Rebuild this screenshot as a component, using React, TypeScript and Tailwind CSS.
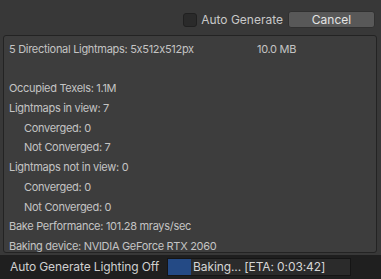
export default function App() {
  const font = { fontFamily: "Inter, 'Noto Sans', sans-serif", fontFeatureSettings: "'calt' 0" };
  const Row = ({ children, indent }: { children: React.ReactNode; indent?: boolean }) => (
    <div className={`h-[19.75px] flex items-center ${indent ? "pl-[15px]" : ""}`}>{children}</div>
  );
  return (
    <div className="w-[381px] h-[279px] bg-[#383838] flex flex-col text-[11px] tracking-[-0.3px] text-[#c4c4c4] overflow-hidden" style={font}>
      <div className="h-[35px] flex items-start justify-end pt-[11px] pr-[6px]">
        <div className="flex items-center h-[17px]">
          <div className="w-[14px] h-[14px] rounded-[3px] bg-[#2a2a2a] border border-[#202020]" />
          <span className="ml-[4px] text-[12px] tracking-normal text-[#c8c8c8]">Auto Generate</span>
          <div className="ml-[5px] w-[87px] h-[17px] rounded-[3px] bg-[#585858] border border-[#303030] flex items-center justify-center text-[12px] tracking-normal text-[#e4e4e4]">
            Cancel
          </div>
        </div>
      </div>
      <div className="ml-[3px] mr-[4px] h-[218px] rounded-[3px] border border-[#232323] bg-[#3d3d3d] pl-[5px] pt-[3px]">
        <Row>
          <span className="w-[248px]">5 Directional Lightmaps: 5x512x512px</span>
          <span>10.0 MB</span>
        </Row>
        <Row>{""}</Row>
        <Row>Occupied Texels: 1.1M</Row>
        <Row>Lightmaps in view: 7</Row>
        <Row indent>Converged: 0</Row>
        <Row indent>Not Converged: 7</Row>
        <Row>Lightmaps not in view: 0</Row>
        <Row indent>Converged: 0</Row>
        <Row indent>Not Converged: 0</Row>
        <Row>Bake Performance: 101.28 mrays/sec</Row>
        <Row>Baking device: NVIDIA GeForce RTX 2060</Row>
      </div>
      <div className="flex-1 mt-[2px] bg-[#1f1f1f] flex items-center pl-[10px] text-[12px] tracking-[-0.1px] text-[#d0d0d0]">
        <span className="w-[157px] shrink-0">Auto Generate Lighting Off</span>
        <div className="w-[184px] h-[18px] bg-[#2b2b2b] border border-[#151515] flex items-center">
          <div className="w-[23px] h-full bg-[#244a85]" />
          <span className="ml-[2px] text-[#d6d6d6]">Baking... [ETA: 0:03:42]</span>
        </div>
      </div>
    </div>
  );
}
